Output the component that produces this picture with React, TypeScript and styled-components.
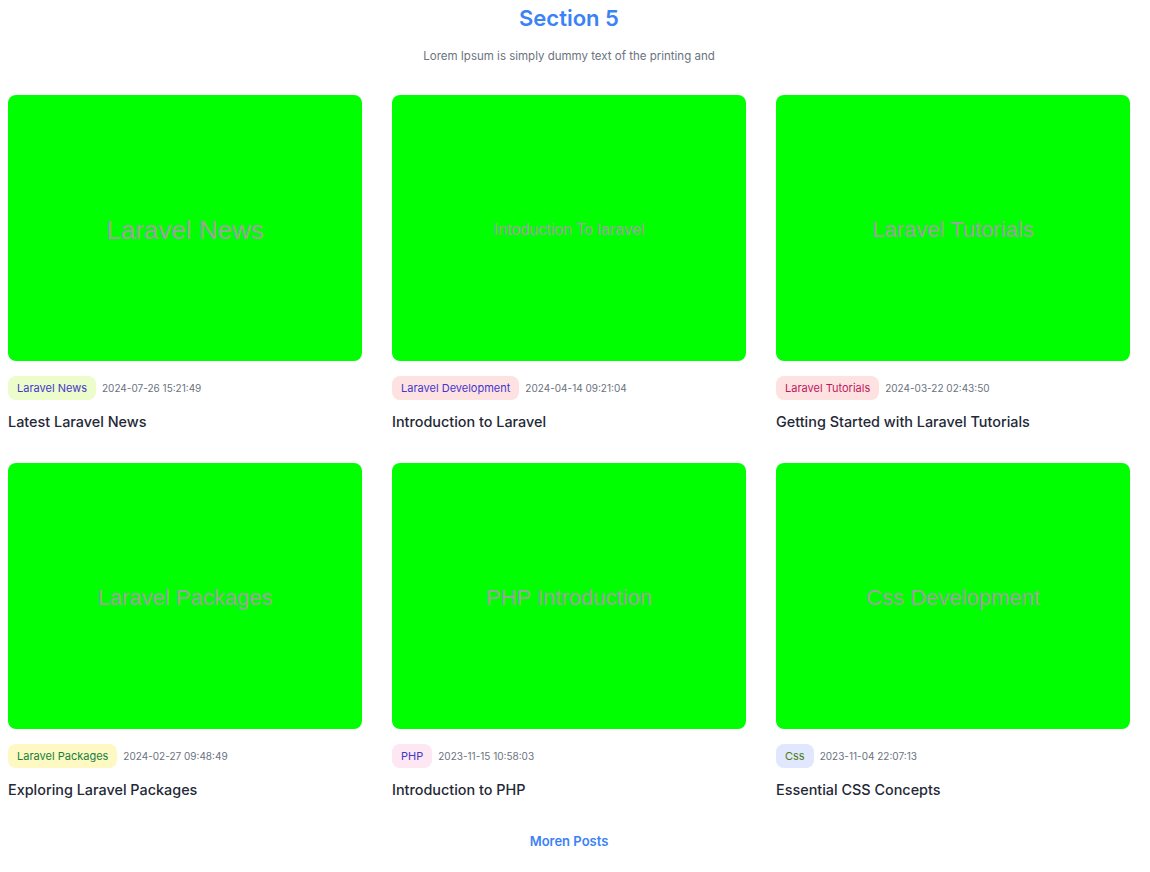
import React from 'react'
import styled, { createGlobalStyle } from 'styled-components'

const GlobalStyle = createGlobalStyle`
  body {
    margin: 0;
    background: #ffffff;
    font-family: Inter, "Noto Sans", sans-serif;
  }
`

const posts = [
  { cover: 'Laravel News', coverSize: 26, tag: 'Laravel News', tagBg: '#ecfccb', tagColor: '#4338ca', date: '2024-07-26 15:21:49', title: 'Latest Laravel News' },
  { cover: 'Intoduction To laravel', coverSize: 16, tag: 'Laravel Development', tagBg: '#fee2e2', tagColor: '#4338ca', date: '2024-04-14 09:21:04', title: 'Introduction to Laravel' },
  { cover: 'Laravel Tutorials', coverSize: 22, tag: 'Laravel Tutorials', tagBg: '#fee2e2', tagColor: '#be185d', date: '2024-03-22 02:43:50', title: 'Getting Started with Laravel Tutorials' },
  { cover: 'Laravel Packages', coverSize: 22, tag: 'Laravel Packages', tagBg: '#fef9c3', tagColor: '#15803d', date: '2024-02-27 09:48:49', title: 'Exploring Laravel Packages' },
  { cover: 'PHP Introduction', coverSize: 22, tag: 'PHP', tagBg: '#fce7f3', tagColor: '#4338ca', date: '2023-11-15 10:58:03', title: 'Introduction to PHP' },
  { cover: 'Css Development', coverSize: 22, tag: 'Css', tagBg: '#e0e7ff', tagColor: '#4d7c0f', date: '2023-11-04 22:07:13', title: 'Essential CSS Concepts' },
]

function App() {
  return (
    <>
      <GlobalStyle />
      <Section>
        <Heading>Section 5</Heading>
        <Lead>Lorem Ipsum is simply dummy text of the printing and</Lead>

        <Grid>
          {posts.map((p) => (
            <Card key={p.title}>
              <Cover $size={p.coverSize}>{p.cover}</Cover>
              <Meta>
                <Tag $bg={p.tagBg} $color={p.tagColor}>{p.tag}</Tag>
                <DateText>{p.date}</DateText>
              </Meta>
              <Title>{p.title}</Title>
            </Card>
          ))}
        </Grid>

        <MoreLink href="#">Moren Posts</MoreLink>
      </Section>
    </>
  )
}

export default App

const Section = styled.section`
  width: 1122px;
  padding: 4px 8px 40px;
  display: flex;
  flex-direction: column;
  align-items: center;
`

const Heading = styled.h2`
  margin: 0;
  font-size: 22px;
  line-height: 28px;
  font-weight: 600;
  color: #3b82f6;
`

const Lead = styled.p`
  margin: 16px 0 0;
  font-size: 11.5px;
  line-height: 16px;
  color: #6b7280;
`

const Grid = styled.div`
  margin-top: 31px;
  width: 100%;
  display: grid;
  grid-template-columns: repeat(3, 354px);
  column-gap: 30px;
  row-gap: 31px;
`

const Card = styled.article`
  display: flex;
  flex-direction: column;
`

const Cover = styled.div<{ $size: number }>`
  height: 266px;
  padding-top: 4px;
  box-sizing: border-box;
  border-radius: 8px;
  background: #00ff00;
  display: flex;
  align-items: center;
  justify-content: center;
  font-family: "Liberation Sans", Arial, sans-serif;
  font-size: ${(p) => p.$size}px;
  color: #a0a0a0;
`

const Meta = styled.div`
  margin-top: 15px;
  display: flex;
  align-items: center;
  gap: 6px;
`

const Tag = styled.span<{ $bg: string; $color: string }>`
  height: 24px;
  padding: 0 9px;
  border-radius: 8px;
  display: inline-flex;
  align-items: center;
  font-size: 11px;
  background: ${(p) => p.$bg};
  color: ${(p) => p.$color};
`

const DateText = styled.span`
  font-size: 10px;
  color: #6b7280;
`

const Title = styled.h3`
  margin: 12px 0 0;
  font-size: 14.4px;
  line-height: 20px;
  font-weight: 500;
  color: #1f2937;
`

const MoreLink = styled.a`
  margin-top: 32px;
  font-size: 13px;
  line-height: 18px;
  font-weight: 600;
  color: #3b82f6;
  text-decoration: none;
`
